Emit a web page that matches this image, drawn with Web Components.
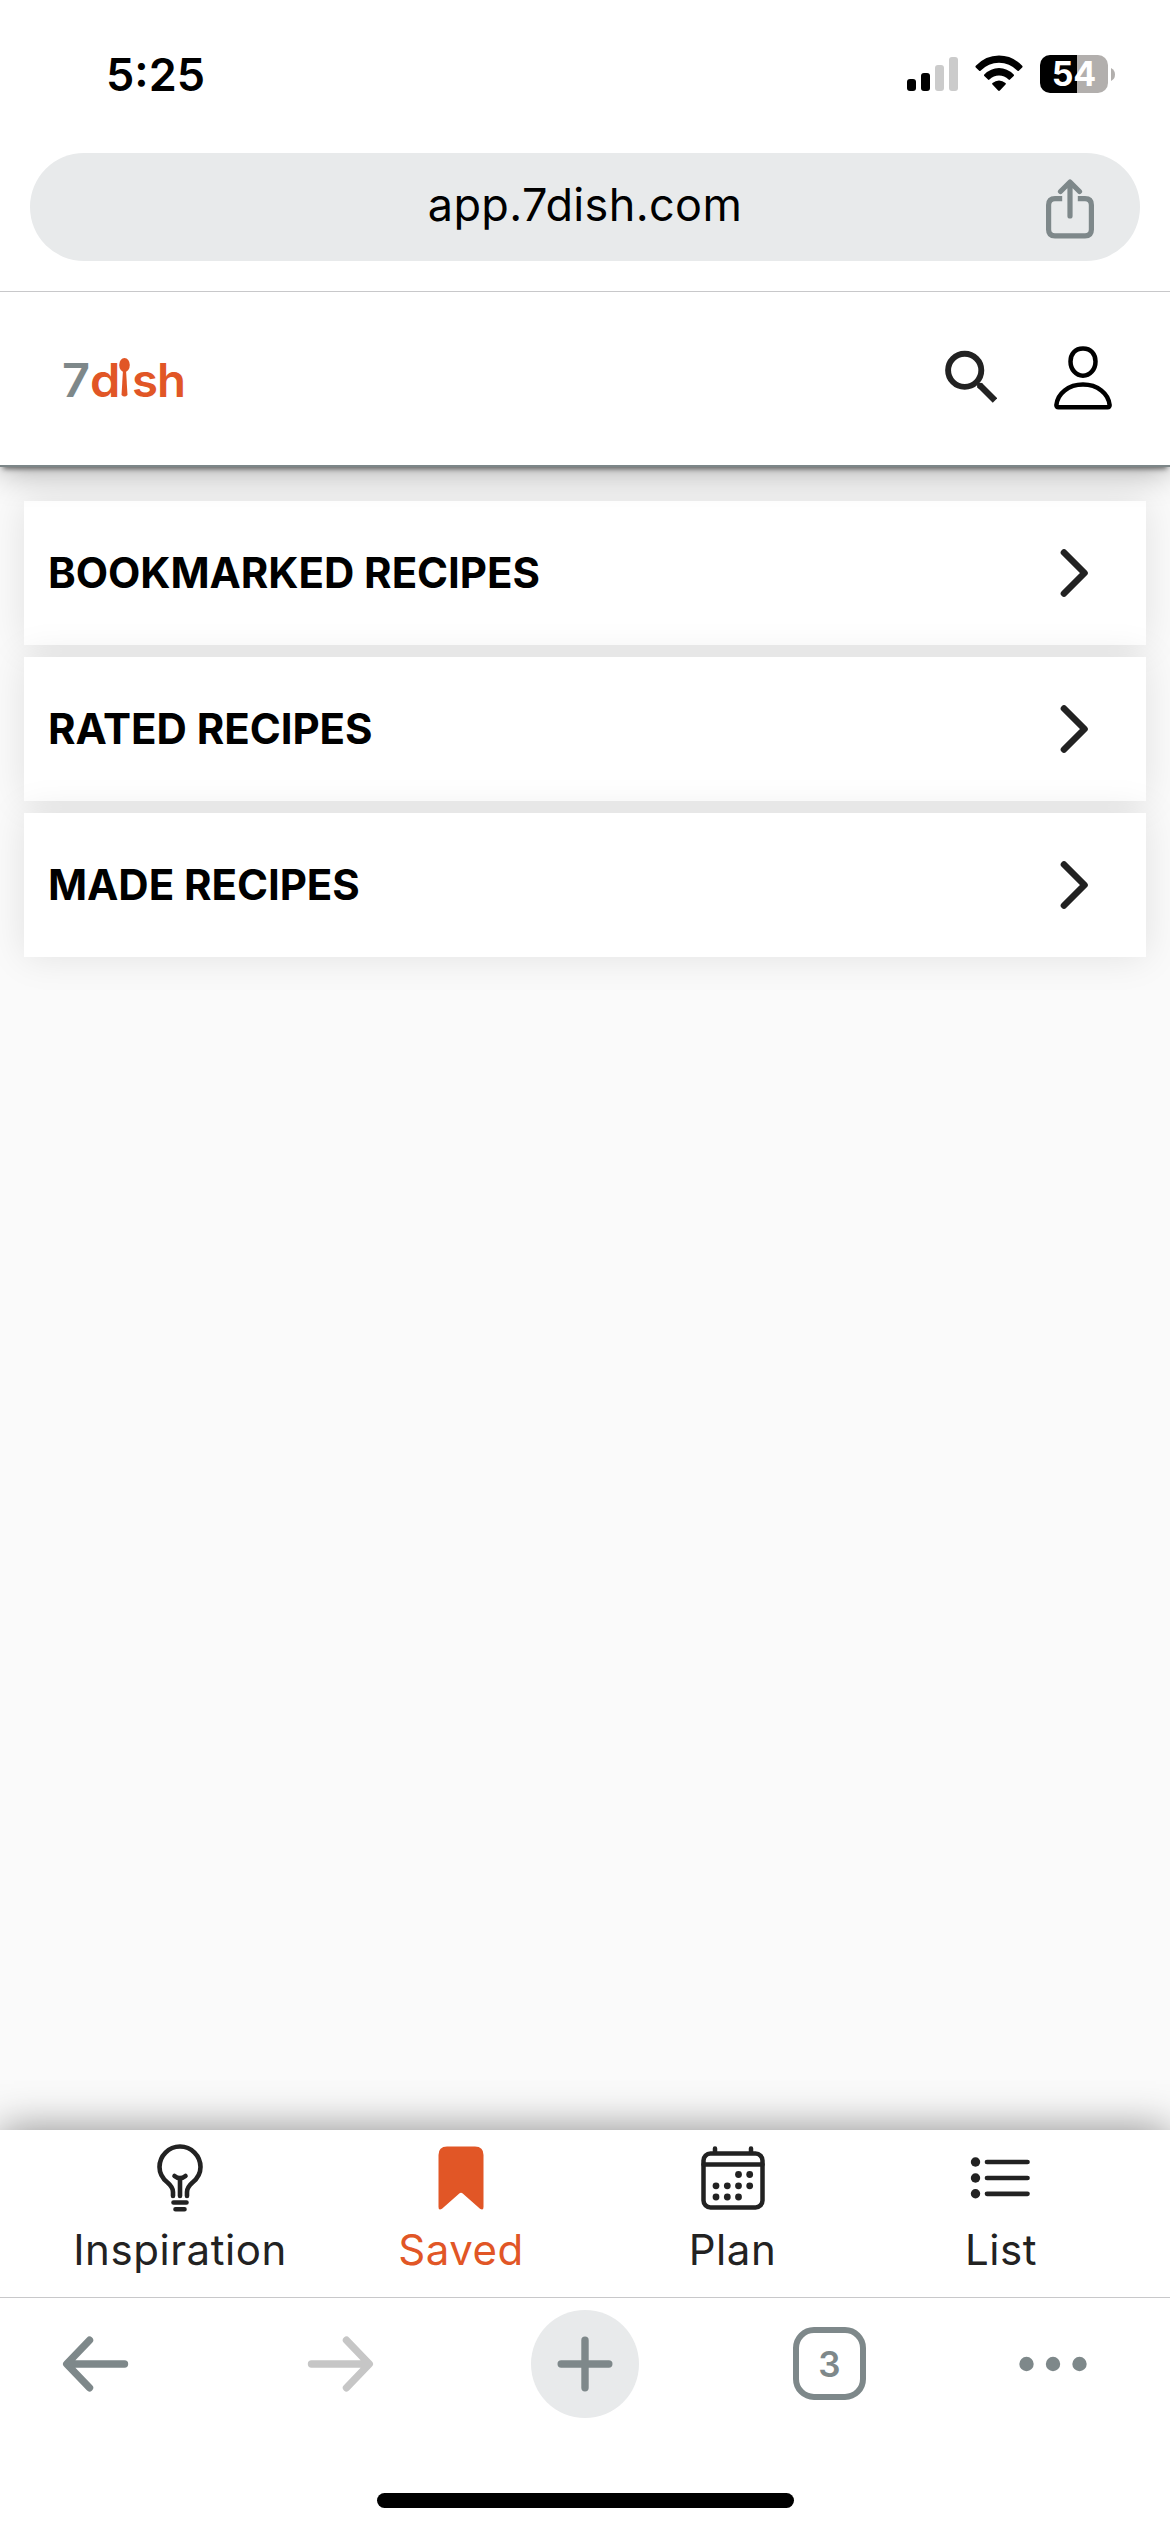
<!DOCTYPE html>
<html lang="en">
<head>
<meta charset="utf-8">
<title>7dish</title>
<style>
html,body{margin:0;padding:0}
body{width:1170px;height:2532px;overflow:hidden;background:#fafafa;font-family:Inter,"Liberation Sans",sans-serif;color:#000}
</style>
</head>
<body>
<dish-app></dish-app>
<script>
const define=(name,html)=>{
  const t=document.createElement('template');
  t.innerHTML=html;
  customElements.define(name,class extends HTMLElement{
    constructor(){super();this.attachShadow({mode:'open'}).append(t.content.cloneNode(true));}
  });
};

define('status-bar',`
<style>
:host{display:flex;box-sizing:border-box;height:153px;padding:55px 55px 0 106px;justify-content:space-between;align-items:flex-start;background:#fff;position:relative;z-index:3}
.time{font-size:45px;font-weight:600;line-height:54px;margin-top:-7px;letter-spacing:0}
.right{display:flex;align-items:flex-start}
.wifi{margin:0 17px}
.bat{display:flex;align-items:center;justify-content:center;width:68px;height:38px;border-radius:10px;background:linear-gradient(90deg,#000 37px,#b2afad 37px);color:#fff;font-size:34px;font-weight:700;line-height:38px}
.nub{margin:13px 0 0 3px}
svg{display:block}
</style>
<span class="time">5:25</span>
<div class="right">
<svg width="51" height="38"><g fill="#000"><rect y="24" width="9" height="12" rx="3"/><rect x="14" y="18" width="9" height="18" rx="3"/></g><g fill="#cbcbcb"><rect x="28" y="10" width="9" height="26" rx="3"/><rect x="42" y="2" width="9" height="34" rx="3"/></g></svg>
<svg class="wifi" width="48" height="38" viewBox="0 0 48 38"><path d="M0.8 10.8Q10.5 .5 24 .5T47.200 10.800Q48 11.600 47.200 12.400L43.800 15.800Q43.200 16.300 42.500 15.700Q34.500 7.700 24 7.700T5.500 15.700Q4.800 16.300 4.200 15.800L.8 12.400Q0 11.600 .8 10.800ZM9.300 19.500Q15.800 13 24 13T38.700 19.500Q39.500 20.300 38.700 21L35 24.600Q34.300 25.200 33.600 24.600Q29.400 20.600 24 20.600T14.400 24.600Q13.700 25.200 13 24.600L9.300 21Q8.500 20.300 9.300 19.500ZM17.500 28Q20.500 25.500 24 25.500T30.500 28Q31.200 28.700 30.500 29.500L24.900 35.500Q24 36.300 23.100 35.500L17.500 29.500Q16.800 28.700 17.500 28Z"/></svg>
<div class="bat"><span>54</span></div>
<svg class="nub" width="4" height="13"><path d="M0 0Q4 2 4 6.500T0 13Z" fill="#b2afad"/></svg>
</div>`);

define('address-bar',`
<style>
:host{display:block;box-sizing:border-box;height:139px;padding:0 30px;background:#fff;border-bottom:1px solid #c8c8ca;position:relative;z-index:3}
.pill{display:grid;grid-template-columns:94px 1fr 94px;align-items:center;height:108px;border-radius:54px;background:#e8eaeb;text-align:center;font-size:45px}
.u{line-height:54px;margin-top:-5px;letter-spacing:.350px}
svg{display:block;margin-top:3px}
</style>
<div class="pill"><i></i><span class="u"><slot></slot></span>
<svg width="48" height="60" fill="none" stroke="#7e888a" stroke-width="5.200" stroke-linecap="round" stroke-linejoin="round"><path d="M16.200 19.600H9Q2.600 19.600 2.600 26V50.500Q2.600 56.900 9 56.900H39Q45.400 56.900 45.400 50.500V26Q45.400 19.600 39 19.600H31.800" stroke-linecap="butt"/><path d="M24 37V4M14.500 12.500L24 3L33.500 12.500"/></svg>
</div>`);

define('app-header',`
<style>
:host{display:flex;box-sizing:border-box;height:175px;padding:0 58px 0 62px;align-items:flex-start;justify-content:space-between;background:#fff;border-bottom:2px solid #7c8688;box-shadow:0 5px 5px -3px rgba(0,0,0,.50),0 4px 32px rgba(0,0,0,.33);position:relative;z-index:2}
.logo{display:flex;align-items:baseline;margin-top:60px;font-size:46px;line-height:56px;font-weight:600;color:#e15626;height:56px}
.logo span{display:block;transform-origin:0 50%}
.seven{color:#7e888a;width:28px;font-weight:600;transform:scaleX(1.06)}
.d{width:28px;transform:scaleX(1.06)}
.i{position:relative;width:14px;text-align:center;color:transparent}
.i svg{position:absolute;left:1px;top:6px}
.s{width:25px;transform:scaleX(1.03)}
.h{transform:scaleX(1.03)}
.icons{display:flex;margin-top:54px;gap:57px}
svg{display:block}
</style>
<div class="logo"><span class="seven">7</span><span class="d">d</span><span class="i">i<svg width="11" height="39"><ellipse cx="5.500" cy="7" rx="5.300" ry="7" fill="#e15626"/><path d="M4 12H7L8.500 37Q5.500 40 2.500 37Z" fill="#e15626"/></svg></span><span class="s">s</span><span class="h">h</span></div>
<div class="icons">
<svg width="52" height="64"><circle cx="19.700" cy="24.300" r="16.600" fill="none" stroke="#222" stroke-width="5.900"/><path d="M34.500 39L50 54.500" stroke="#222" stroke-width="6.300"/><circle cx="35" cy="39.700" r="3" fill="#222"/></svg>
<svg width="58" height="66" fill="none" stroke="#000" stroke-width="4.500" stroke-linejoin="round"><path d="M29 2.500C37 2.500 41.500 8 41.500 15.500C41.500 23.500 36 29.700 29 29.700S16.500 23.500 16.500 15.500C16.500 8 21 2.500 29 2.500Z"/><path d="M4.500 61.200H53.500Q55.800 61.200 55.600 59C54.500 47.500 43.500 38.500 29 38.500S3.500 47.500 2.400 59Q2.200 61.200 4.500 61.200Z"/></svg>
</div>`);

define('recipe-row',`
<style>
:host{display:flex;box-sizing:border-box;height:144px;padding:0 58px 0 24px;align-items:center;justify-content:space-between;background:#fff;box-shadow:0 0 36px rgba(0,0,0,.10);font-size:42px;font-weight:700;letter-spacing:-.060px}
span{margin-top:-2px}
svg{display:block}
</style>
<span><slot></slot></span>
<svg width="28" height="50" fill="none" stroke="#222" stroke-width="6.600" stroke-linecap="round" stroke-linejoin="round"><path d="M4 4.500L24.500 25L4 45.500"/></svg>`);

define('nav-item',`
<style>
:host{display:flex;flex-direction:column;align-items:center;color:#222;font-size:42px;line-height:50px;letter-spacing:.550px}
:host([active]){color:#e15626}
.ic{display:flex;height:95px;box-sizing:border-box;padding-top:14px}
</style>
<div class="ic"><slot name="icon"></slot></div><span><slot></slot></span>`);

define('bottom-nav',`
<style>
:host{display:grid;grid-template-columns:360px 202px 341px 196px;box-sizing:border-box;height:168px;background:#fff;border-bottom:1px solid #c8c8ca;box-shadow:0 0 40px rgba(0,0,0,.45);position:relative;z-index:1}
svg{display:block}
</style>
<nav-item><svg slot="icon" width="46" height="68" fill="none" stroke="#222" stroke-width="4.600" stroke-linecap="round" stroke-linejoin="round"><path d="M16 52V48C16 44 14 41.500 10.500 38.500C5.500 34.500 2.500 29.500 2.500 23A20.500 20.500 0 0 1 43.500 23C43.500 29.500 40.500 34.500 35.500 38.500C32 41.500 30 44 30 48V52M23 52V35M17.500 32Q23 36.500 28.500 32M16.500 58.500H29.500M18.500 65.300H27.500"/></svg>Inspiration</nav-item>
<nav-item active><svg slot="icon" width="46" height="68"><path d="M9 2.500H37Q45.500 2.500 45.500 11V63Q45.500 67 42 64.800L25 49.700Q23 48 21 49.700L4 64.800Q.5 67 .5 63V11Q.5 2.500 9 2.500Z" fill="#e15626"/></svg>Saved</nav-item>
<nav-item><svg slot="icon" width="64" height="68" fill="none" stroke="#222" stroke-width="4.500" stroke-linecap="round"><rect x="2.500" y="9.500" width="59" height="54" rx="7"/><path d="M2.500 20.500H61.500M14 4.500V8M50 4.500V8"/><g fill="#222" stroke="none"><circle cx="37.500" cy="30.500" r="3.400"/><circle cx="48.700" cy="30.500" r="3.400"/><circle cx="15" cy="41.800" r="3.400"/><circle cx="26.300" cy="41.800" r="3.400"/><circle cx="37.500" cy="41.800" r="3.400"/><circle cx="48.700" cy="41.800" r="3.400"/><circle cx="15" cy="53" r="3.400"/><circle cx="26.300" cy="53" r="3.400"/><circle cx="37.500" cy="53" r="3.400"/></g></svg>Plan</nav-item>
<nav-item><svg slot="icon" width="62" height="68" stroke="#222" stroke-width="4.700" stroke-linecap="round"><path d="M17 18H57.500M17 34H57.500M17 49.800H57.500"/><g fill="#222" stroke="none"><circle cx="5.500" cy="18" r="4.700"/><circle cx="5.500" cy="34" r="4.700"/><circle cx="5.500" cy="49.800" r="4.700"/></g></svg>List</nav-item>`);

define('browser-toolbar',`
<style>
:host{display:block;height:234px;background:#fff;position:relative;z-index:2}
.row{display:grid;grid-template-columns:190px 301px 188px 301px 145px;justify-items:center;align-items:center;height:131px}
svg{display:block}
.plus{display:flex;align-items:center;justify-content:center;width:108px;height:108px;border-radius:50%;background:#e8eaeb}
.tabs{box-sizing:border-box;width:73px;height:73px;border:6.500px solid #7e888a;border-radius:21px;color:#7e888a;font-size:35px;font-weight:600;line-height:62px;text-align:center}
.home{width:417px;height:15px;border-radius:8px;background:#000;margin:64px auto 0}
</style>
<div class="row">
<svg width="67" height="56" fill="none" stroke="#7e888a" stroke-width="7.400" stroke-linecap="round" stroke-linejoin="round"><path d="M62.500 28H5M27.500 4.200L4.700 28L27.500 51.800"/></svg>
<svg width="67" height="56" fill="none" stroke="#c6c6c6" stroke-width="7.400" stroke-linecap="round" stroke-linejoin="round"><path d="M4.500 28H62M39.500 4.200L62.300 28L39.500 51.800"/></svg>
<div class="plus"><svg width="56" height="56" stroke="#7e888a" stroke-width="7.400" stroke-linecap="round"><path d="M28 4.200V51.800M4.200 28H51.800"/></svg></div>
<div class="tabs">3</div>
<svg width="68" height="16" fill="#7e888a"><circle cx="7.500" cy="8" r="7.200"/><circle cx="34" cy="8" r="7.200"/><circle cx="60.500" cy="8" r="7.200"/></svg>
</div>
<div class="home"></div>`);

define('dish-app',`
<style>
:host{display:flex;flex-direction:column;height:2532px}
main{flex:1;display:flex;flex-direction:column;gap:12px;padding:34px 24px 0;background:#fafafa;overflow:hidden}
</style>
<status-bar></status-bar>
<address-bar>app.7dish.com</address-bar>
<app-header></app-header>
<main><recipe-row>BOOKMARKED RECIPES</recipe-row><recipe-row>RATED RECIPES</recipe-row><recipe-row>MADE RECIPES</recipe-row></main>
<bottom-nav></bottom-nav>
<browser-toolbar></browser-toolbar>`);
</script>
</body>
</html>
